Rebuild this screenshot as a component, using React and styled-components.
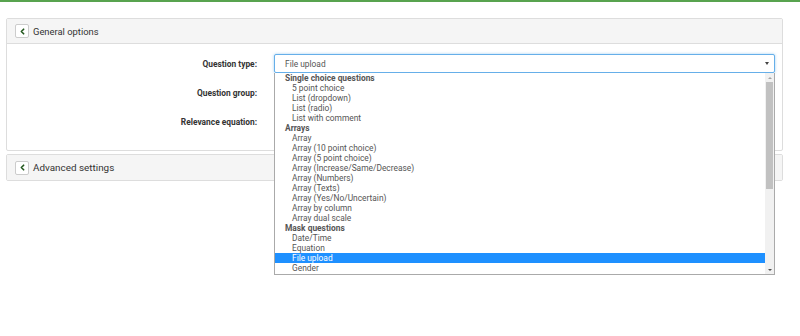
import React from 'react';
import styled, { createGlobalStyle } from 'styled-components';
import { ChevronLeft } from 'lucide-react';

const GlobalStyle = createGlobalStyle`
  html, body {
    margin: 0;
    padding: 0;
    background: #ffffff;
    font-family: Roboto, "Liberation Sans", sans-serif;
    color: #333333;
  }
  #root {
    min-height: 336px;
  }
`;

const groups = [
  {
    title: 'Single choice questions',
    items: ['5 point choice', 'List (dropdown)', 'List (radio)', 'List with comment'],
  },
  {
    title: 'Arrays',
    items: [
      'Array',
      'Array (10 point choice)',
      'Array (5 point choice)',
      'Array (Increase/Same/Decrease)',
      'Array (Numbers)',
      'Array (Texts)',
      'Array (Yes/No/Uncertain)',
      'Array by column',
      'Array dual scale',
    ],
  },
  {
    title: 'Mask questions',
    items: ['Date/Time', 'Equation', 'File upload', 'Gender'],
  },
];

const selected = 'File upload';

const App = () => {
  return (
    <>
      <GlobalStyle />
      <TopBar />
      <Page>
        <Panel>
          <PanelHeader>
            <ToggleBtn>
              <ChevronLeft size={9} strokeWidth={4.5} color="#24591f" />
            </ToggleBtn>
            <PanelTitle>General options</PanelTitle>
          </PanelHeader>
          <PanelBody>
            <FormRow>
              <Label>Question type:</Label>
              <SelectWrap>
                <Select $focused>
                  <SelectValue>File upload</SelectValue>
                  <Caret />
                </Select>
                <Dropdown>
                  <OptionList>
                    {groups.map(g => (
                      <React.Fragment key={g.title}>
                        <GroupTitle>{g.title}</GroupTitle>
                        {g.items.map(item => (
                          <Option key={item} $active={item === selected}>
                            {item}
                          </Option>
                        ))}
                      </React.Fragment>
                    ))}
                  </OptionList>
                  <Scrollbar>
                    <ScrollArrow $up />
                    <ScrollTrack>
                      <ScrollThumb />
                    </ScrollTrack>
                    <ScrollArrow />
                  </Scrollbar>
                </Dropdown>
              </SelectWrap>
            </FormRow>
            <FormRow>
              <Label>Question group:</Label>
              <Select />
            </FormRow>
            <FormRow>
              <Label>Relevance equation:</Label>
              <Select />
            </FormRow>
          </PanelBody>
        </Panel>
        <Panel>
          <PanelHeader $last>
            <ToggleBtn>
              <ChevronLeft size={9} strokeWidth={4.5} color="#24591f" />
            </ToggleBtn>
            <PanelTitle $large>Advanced settings</PanelTitle>
          </PanelHeader>
        </Panel>
      </Page>
    </>
  );
};

export default App;

const TopBar = styled.div`
  height: 2px;
  background: #58a34f;
`;

const Page = styled.div`
  display: flex;
  flex-direction: column;
  gap: 3px;
  padding: 16px 17px 0 6px;
`;

const Panel = styled.div`
  border: 1px solid #dddddd;
  border-radius: 2px;
  background: #ffffff;
`;

const PanelHeader = styled.div`
  display: flex;
  align-items: center;
  gap: 4px;
  padding: 0 8px;
  background: #f5f5f5;
  border-bottom: ${props => (props.$last ? 'none' : '1px solid #dddddd')};
  height: ${props => (props.$last ? '25px' : '24px')};
`;

const ToggleBtn = styled.div`
  display: flex;
  align-items: center;
  justify-content: center;
  width: 12px;
  height: 12px;
  background: #ffffff;
  border: 1px solid #cccccc;
  border-radius: 2px;
`;

const PanelTitle = styled.span`
  font-size: ${props => (props.$large ? '9.9px' : '9.4px')};
  color: #333333;
`;

const PanelBody = styled.div`
  display: flex;
  flex-direction: column;
  gap: 10px;
  padding: 10px 7px 19px 0;
`;

const FormRow = styled.div`
  display: grid;
  grid-template-columns: 250px 1fr;
  column-gap: 17px;
  align-items: center;
`;

const Label = styled.label`
  text-align: right;
  font-size: 8.4px;
  font-weight: 700;
  color: #333333;
`;

const SelectWrap = styled.div`
  position: relative;
`;

const Select = styled.div`
  display: flex;
  align-items: center;
  justify-content: space-between;
  height: 17px;
  padding: 0 5px 0 10px;
  border: 1px solid ${props => (props.$focused ? '#66afe9' : '#cccccc')};
  box-shadow: ${props => (props.$focused ? '0 0 3px rgba(102,175,233,0.6)' : 'none')};
  border-radius: 2px;
  background: #ffffff;
`;

const SelectValue = styled.span`
  font-size: 8.4px;
  color: #555555;
`;

const Caret = styled.span`
  width: 0;
  height: 0;
  border-left: 2.5px solid transparent;
  border-right: 2.5px solid transparent;
  border-top: 3px solid #444444;
`;

const Dropdown = styled.div`
  position: absolute;
  top: 19px;
  left: 0;
  right: 0;
  height: 201px;
  display: flex;
  border: 1px solid #aaaaaa;
  border-top: none;
  background: #ffffff;
  z-index: 10;
`;

const OptionList = styled.div`
  flex: 1;
  display: flex;
  flex-direction: column;
  overflow: hidden;
`;

const GroupTitle = styled.div`
  height: 10px;
  line-height: 10px;
  padding-left: 10px;
  font-size: 8.4px;
  font-weight: 700;
  color: #555555;
`;

const Option = styled.div`
  height: 10px;
  line-height: 10px;
  padding-left: 17px;
  font-size: 8.4px;
  color: ${props => (props.$active ? '#ffffff' : '#555555')};
  background: ${props => (props.$active ? '#1e90ff' : 'transparent')};
`;

const Scrollbar = styled.div`
  width: 9px;
  display: flex;
  flex-direction: column;
  background: #f1f1f1;
`;

const ScrollArrow = styled.div`
  height: 9px;
  display: flex;
  align-items: center;
  justify-content: center;

  &::after {
    content: '';
    border-left: 2.5px solid transparent;
    border-right: 2.5px solid transparent;
    ${props =>
      props.$up ? 'border-bottom: 2.5px solid #a3a3a3;' : 'border-top: 2.5px solid #505050;'}
  }
`;

const ScrollTrack = styled.div`
  flex: 1;
  padding: 0 1px;
`;

const ScrollThumb = styled.div`
  height: 107px;
  background: #c1c1c1;
`;
